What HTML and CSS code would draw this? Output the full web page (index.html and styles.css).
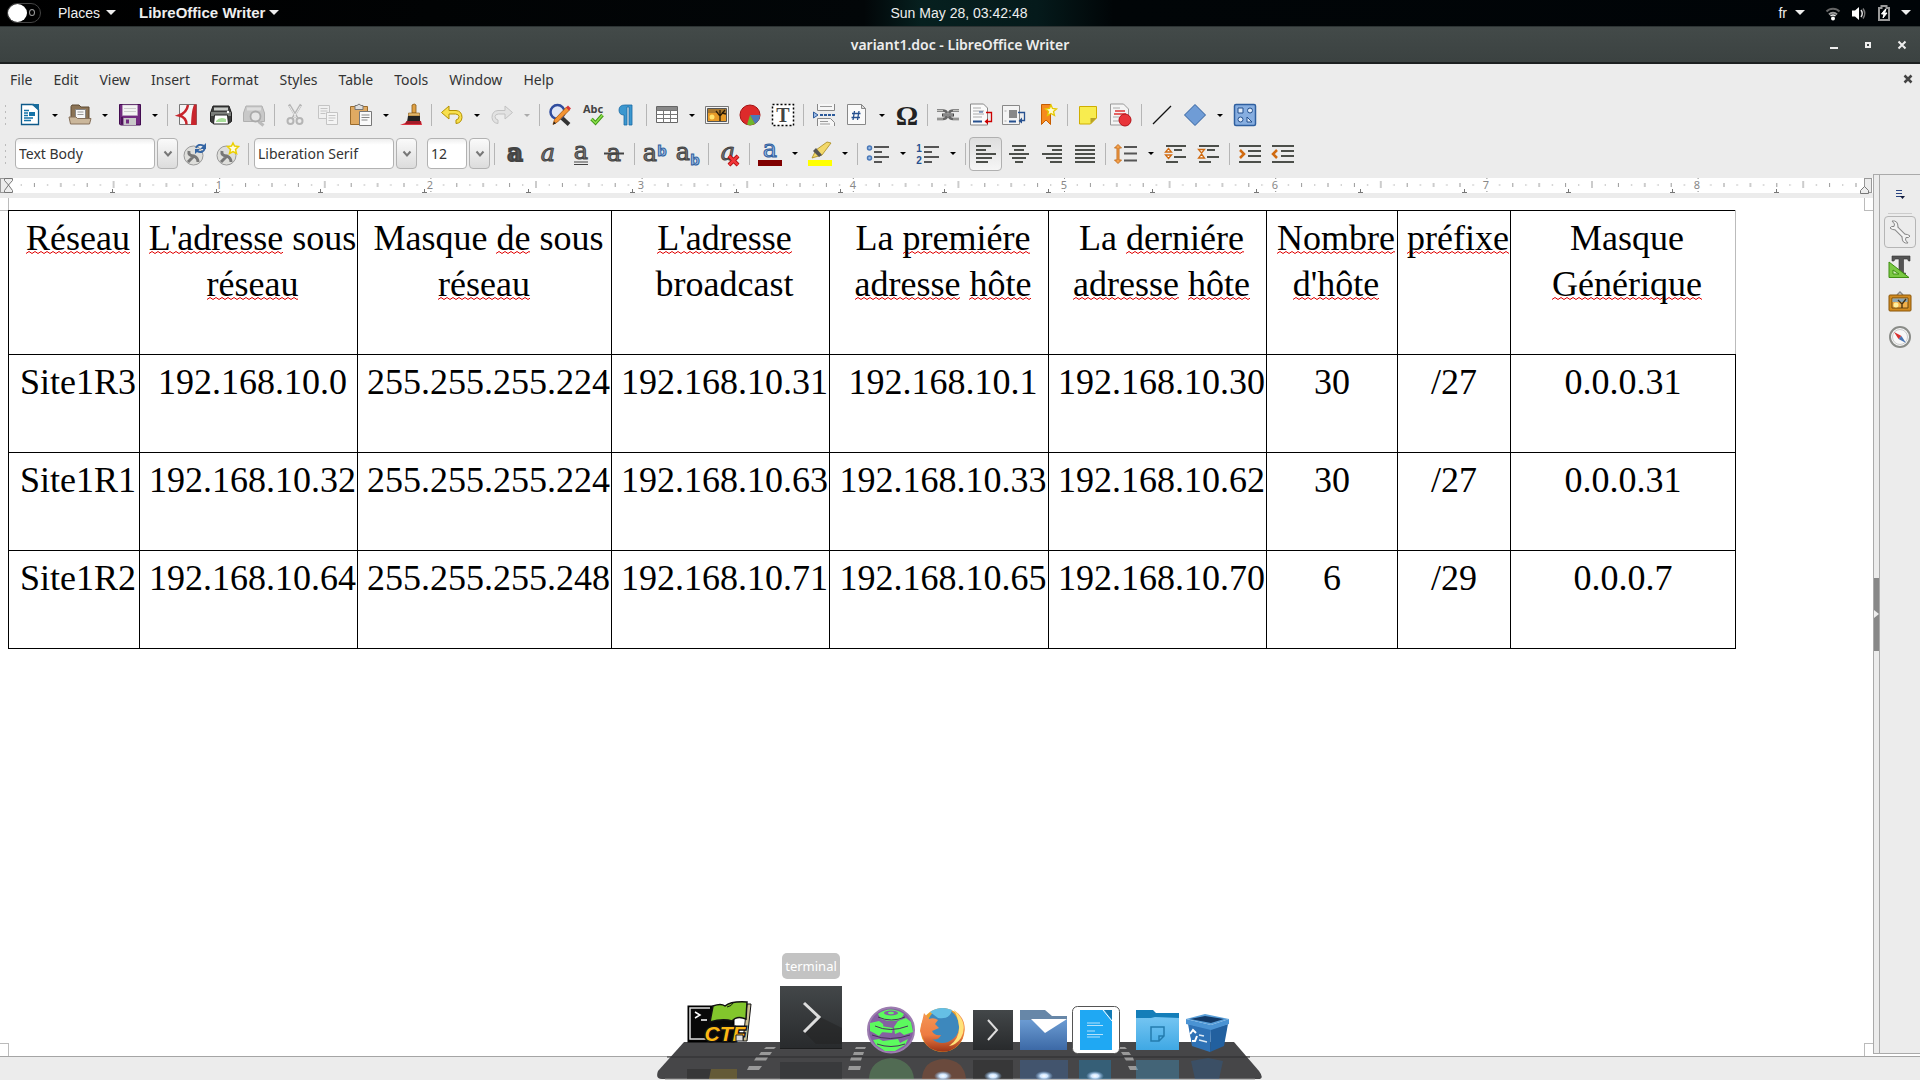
FILE: index.html
```html
<!DOCTYPE html>
<html lang="en">
<head>
<meta charset="utf-8">
<title>variant1.doc - LibreOffice Writer</title>
<link rel="stylesheet" href="styles.css">
</head>
<body>
<header class="topbar">
  <div class="topbar-side">
    <button class="activities" aria-label="Activities"><span class="knob"></span><span class="ring"></span></button>
    <button class="top-item">Places<span class="tri"></span></button>
    <button class="top-item top-app">LibreOffice Writer<span class="tri"></span></button>
  </div>
  <time class="clock">Sun May 28, 03:42:48</time>
  <div class="topbar-side topbar-right">
    <button class="top-item lang">fr<span class="tri"></span></button>
    <button class="top-item tray" aria-label="System">
      <svg width="16" height="16" viewBox="0 0 16 16" fill="none"><path d="M1.5 6.5a9 9 0 0 1 13 0" stroke="#666" stroke-width="2"/><path d="M4 9.5a5.500 5.500 0 0 1 8 0" stroke="#999" stroke-width="2"/><path d="M5.500 11a4 4 0 0 1 5 0" stroke="#eee" stroke-width="1.500"/><circle cx="8" cy="13.500" r="2" fill="#fff"/></svg>
      <svg width="16" height="16" viewBox="0 0 16 16" fill="none"><path d="M1 5.500h3L8 2v13L4 11.500H1z" fill="#fff"/><path d="M10 5q2.500 3.500 0 7" stroke="#ddd" stroke-width="1.500"/><path d="M12 3.500q3.500 5 0 10" stroke="#777" stroke-width="1.500"/></svg>
      <svg width="14" height="18" viewBox="0 0 14 18" fill="none"><path d="M2 4h2.500V2h5v2H12v12H2z" stroke="#999" stroke-width="2"/><path d="M8 5.500L4.500 10H7l-1 4 4-5H7.500l1.500-3.500z" fill="#fff" stroke="#fff"/></svg>
      <span class="tri"></span>
    </button>
  </div>
</header>

<div class="titlebar">
  <h1 class="title">variant1.doc - LibreOffice Writer</h1>
  <div class="win-buttons">
    <button aria-label="Minimize"><svg width="10" height="10"><path d="M1 7h8v2H1z" fill="#eee"/></svg></button>
    <button aria-label="Maximize"><svg width="10" height="10"><path d="M3 3h4v4H3z" fill="none" stroke="#eee" stroke-width="2"/></svg></button>
    <button aria-label="Close"><svg width="10" height="10"><path d="M1.500 1.500l7 7m0-7l-7 7" stroke="#eee" stroke-width="2"/></svg></button>
  </div>
</div>

<nav class="menubar">
  <button>File</button><button>Edit</button><button>View</button><button>Insert</button><button>Format</button><button>Styles</button><button>Table</button><button>Tools</button><button>Window</button><button>Help</button>
  <button class="doc-close" aria-label="Close document"><svg width="10" height="10"><path d="M1.500 1.500l7 7m0-7l-7 7" stroke="#444" stroke-width="2.500"/></svg></button>
</nav>

<div class="toolbar" role="toolbar" aria-label="Standard">
  <span class="grip"></span>
  <button class="tb" aria-label="New"><svg viewBox="0 0 24 24"><path d="M3.500 1.500h12l5 5v15h-17z" fill="#fff" stroke="#0e5a8a" stroke-width="1.300"/><path d="M13 1h8v7z" fill="#1a6c9c"/><path d="M6 7.500h5M6 10h4M6 12.500h4M6 15h9M6 17.500h7" stroke="#1573a8" stroke-width="1.500"/><path d="M11 9h6v4h-6z" fill="#1573a8"/></svg></button>
  <button class="dd" aria-label="New options"></button>
  <button class="tb" aria-label="Open"><svg viewBox="0 0 24 24"><path d="M3 18V3.500l1-1.500h7l2 2h8v14z" fill="#8b7355" stroke="#5f4b33"/><path d="M7.500 6.500h10V16h-10z" fill="#f8f8f8" stroke="#888"/><path d="M9.500 9h6M9.500 11.500h6" stroke="#999"/><path d="M1 14h7l1.500 1.500H23l-1.500 5.500h-19z" fill="#cbb79b" stroke="#86705a"/></svg></button>
  <button class="dd" aria-label="Open options"></button>
  <button class="tb" aria-label="Save"><svg viewBox="0 0 24 24"><path d="M1.500 1.500h21v20.500h-20l-1-1z" fill="#722a80" stroke="#430c50"/><path d="M4.500 2h15v10.500h-15z" fill="#f3f3f3" stroke="#bda7c2" stroke-width=".6"/><path d="M6 5.500h12M6 8.500h12" stroke="#ccc"/><path d="M5.500 15H18v7H5.500z" fill="#c9c9c9"/><path d="M8 16.500h3v4H8z" fill="#722a80"/><path d="M3 14h2v7H3z" fill="#4b1458"/></svg></button>
  <button class="dd" aria-label="Save options"></button>
  <span class="sep"></span>
  <button class="tb" aria-label="Export as PDF"><svg viewBox="0 0 24 24"><path d="M3.500 1.500h17v20h-17z" fill="#f5f5f5" stroke="#777"/><path d="M12 2C11 8 7 11 3 12.500c4 1 7.500 4 7.500 9" fill="none" stroke="#c8252c" stroke-width="2.500"/><path d="M15 22c.5-8 .5-14 3-20.500h2.500V22z" fill="#c8252c"/></svg></button>
  <button class="tb" aria-label="Print"><svg viewBox="0 0 24 24"><path d="M4 3h16l2.500 7v8.500l-2 1.500h-17l-2-1.500V10z" fill="#3c3c3c" stroke="#222"/><path d="M5 4.500h14v3H5z" fill="#c9ccc9"/><path d="M2 9h20v4H2z" fill="#7a7d7a"/><circle cx="19" cy="9" r="1.200" fill="#fff"/><path d="M5.500 12h13l1 9h-15z" fill="#fff" stroke="#222"/><path d="M7 18q4-5 10-2v3H7z" fill="#a8dd9a"/></svg></button>
  <button class="tb" aria-label="Print preview"><svg viewBox="0 0 24 24"><path d="M4 3h16l2.500 7v8.500H1.500V10z" fill="#c8c8c8" stroke="#b0b0b0"/><path d="M5 4.500h14v3H5z" fill="#dedede"/><path d="M16.500 18.500l5 4" stroke="#bbb" stroke-width="3"/><circle cx="13.500" cy="13.500" r="5" fill="#e6e6e6" stroke="#aaa" stroke-width="1.800"/></svg></button>
  <span class="sep"></span>
  <button class="tb" aria-label="Cut"><svg viewBox="0 0 24 24" fill="none" stroke="#b5b5b5"><path d="M6 1.500l8.500 14M18 1.500l-8.500 14" stroke-width="2.500"/><path d="M6.500 3l7 12M17.500 3l-7 12" stroke="#ececec"/><circle cx="7.500" cy="18" r="3" stroke-width="2"/><circle cx="16.500" cy="18" r="3" stroke-width="2"/></svg></button>
  <button class="tb" aria-label="Copy"><svg viewBox="0 0 24 24" stroke="#c4c4c4"><path d="M2.500 2.500h11v13h-11z" fill="#f0f0f0"/><path d="M4.500 5.500h7M4.500 8h7M4.500 10.500h5"/><path d="M10.500 9.500h11v12h-11z" fill="#f4f4f4"/><path d="M12.500 12.500h7M12.500 15h7M12.500 17.500h5"/></svg></button>
  <button class="tb" aria-label="Paste"><svg viewBox="0 0 24 24"><path d="M1.500 3.500h17v18h-17z" fill="#e0aa62" stroke="#9a6b2c"/><path d="M6 2.500h2q2-3 4 0h2v4H6z" fill="#ddd" stroke="#777"/><path d="M10.500 8.500h12v14h-12z" fill="#fafafa" stroke="#777"/><path d="M12.500 12h8M12.500 14.500h8M12.500 17h6" stroke="#888"/></svg></button>
  <button class="dd" aria-label="Paste options"></button>
  <button class="tb" aria-label="Clone formatting"><svg viewBox="0 0 24 24"><path d="M1 22q5-1 9-5l12 1 1 4z" fill="#dd3340"/><path d="M13 2q2.500-2 4 0v8h-4z" fill="#dfa044" stroke="#875a18" stroke-width=".8"/><path d="M9.500 10h11v3h-11z" fill="#e2b66a" stroke="#875a18" stroke-width=".6"/><path d="M9 13h12v6H8z" fill="#222"/><path d="M7.500 18h14l.5 3H6z" fill="#a31b28"/></svg></button>
  <span class="sep"></span>
  <button class="tb" aria-label="Undo"><svg viewBox="0 0 24 24"><path d="M9 3v4.500h7q6 .5 6 7-.5 5.500-6 6v-3.500q3-.5 3-3.500-.5-2.500-3.500-2.500H9V16L1.500 9.500z" fill="#f8e04e" stroke="#b49100" stroke-linejoin="round"/></svg></button>
  <button class="dd" aria-label="Undo options"></button>
  <button class="tb" aria-label="Redo"><svg viewBox="0 0 24 24"><path d="M15 3v4.500H8q-6 .5-6 7 .5 5.500 6 6v-3.500q-3-.5-3-3.500.5-2.500 3.500-2.500H15V16l7.500-6.500z" fill="#e2e2e2" stroke="#c2c2c2" stroke-linejoin="round"/></svg></button>
  <button class="dd dd-off" aria-label="Redo options"></button>
  <span class="sep"></span>
  <button class="tb" aria-label="Find and replace"><svg viewBox="0 0 24 24"><path d="M14 15l7 6.500" stroke="#333" stroke-width="4"/><circle cx="9.500" cy="9" r="7" fill="#dfe6f5" stroke="#2f4c9e" stroke-width="2.500"/><path d="M5 21.500l1.500-5L18.500 4l3 3-12 12z" fill="#f39434" stroke="#a85508" stroke-width=".8"/><path d="M18 4.500l2-2 3 3-2 2z" fill="#d7383c"/><path d="M5 21.500l1-3 2 2z" fill="#222"/></svg></button>
  <button class="tb" aria-label="Spelling"><svg viewBox="0 0 24 24"><text x="12" y="10" class="ico-abc">Abc</text><path d="M10.500 16l4 4 7-8" fill="none" stroke="#3f9a14" stroke-width="3.500"/><path d="M10.500 16l4 4 7-8" fill="none" stroke="#8fe04e" stroke-width="1.500"/></svg></button>
  <button class="tb" aria-label="Formatting marks"><svg viewBox="0 0 24 24"><path d="M5 7q0-5 6-5h7v20h-3V4h-2v18h-3V12Q5 12 5 7z" fill="#3b97cf" stroke="#1b6ba4" stroke-width=".8"/></svg></button>
  <span class="sep"></span>
  <button class="tb" aria-label="Insert table"><svg viewBox="0 0 24 24"><path d="M1.500 3.500h21v16h-21z" fill="#fff" stroke="#666"/><path d="M2 4h20v3.500H2z" fill="#888"/><path d="M1.500 7.500h21M1.500 11.500h21M1.500 15.500h21M8.500 7v12.500M15.500 7v12.500" stroke="#777"/></svg></button>
  <button class="dd" aria-label="Table options"></button>
  <button class="tb" aria-label="Insert image"><svg viewBox="0 0 24 24"><path d="M.5 3.500h23v17H.5z" fill="#f3f3f3" stroke="#777"/><path d="M2.500 5.500h19v13h-19z" fill="#e79b28" stroke="#555"/><path d="M3 6h18v4H3z" fill="#a9782e"/><circle cx="7" cy="14" r="2.500" fill="#ffe26e"/><path d="M15 18v-5l-4-5m4 5l5-6m-5 5V7m2 3l4 1" fill="none" stroke="#2a1c08" stroke-width="1.300"/></svg></button>
  <button class="tb" aria-label="Insert chart"><svg viewBox="0 0 24 24"><circle cx="12" cy="12" r="10" fill="#dd2b2b" stroke="#a51212"/><path d="M12 12h10q0 6-5 9z" fill="#4d79b8"/><path d="M12 12l5 9q-4 2-8 .5z" fill="#6fb62c"/></svg></button>
  <button class="tb" aria-label="Insert text box"><svg viewBox="0 0 24 24"><path d="M1.500 1.500h21v21h-21z" fill="#fff" stroke="#000" stroke-width="1.500" stroke-dasharray="2 2"/><text x="12" y="19" class="ico-t">T</text></svg></button>
  <span class="sep"></span>
  <button class="tb" aria-label="Insert page break"><svg viewBox="0 0 24 24"><path d="M5.500 1v6.500h17V1M5.500 23v-7.500h13l4 4V23" fill="#f6f6f6" stroke="#888"/><path d="M8 3.500h12M8 18.500h8M8 21h10" stroke="#999"/><path d="M1.500 9l4.500 3-4.500 3z" fill="#9dbbe6" stroke="#2c5a9a"/><path d="M8 12h15" stroke="#2c5a9a" stroke-width="2" stroke-dasharray="3 1"/></svg></button>
  <button class="tb" aria-label="Insert field"><svg viewBox="0 0 24 24"><path d="M2.500 1.500h14l4 4v16h-18z" fill="#fafafa" stroke="#888"/><path d="M16.500 1.500v4h4z" fill="#ddd" stroke="#888"/><path d="M9.500 8l-1.500 9M14 8l-1.500 9M7 10.500h8.500M6.500 14.500H15" stroke="#26508f" stroke-width="1.300"/></svg></button>
  <button class="dd" aria-label="Field options"></button>
  <button class="tb" aria-label="Special character"><svg viewBox="0 0 24 24"><text x="12" y="22" class="ico-omega">Ω</text></svg></button>
  <span class="sep"></span>
  <button class="tb" aria-label="Insert hyperlink"><svg viewBox="0 0 24 24" fill="none"><path d="M1 7.500h6q3 0 4 2.500M1 16h6q3 0 4-2.500M23 7.500h-6q-3 0-4 2.500M23 16h-6q-3 0-4-2.500" stroke="#666" stroke-width="2.500"/><path d="M1 7.500h6M1 16h6M23 7.500h-6M23 16h-6" stroke="#c4c4c0"/><path d="M6 12h12" stroke="#444" stroke-width="3"/><path d="M7 12h10" stroke="#ccc"/></svg></button>
  <button class="tb" aria-label="Insert footnote"><svg viewBox="0 0 24 24"><path d="M1.500 1h13l4 4v17h-17z" fill="#fafafa" stroke="#888"/><path d="M4 5h8M4 8h11M4 11h11M4 14h9" stroke="#aaa"/><path d="M10 9h4" stroke="#26508f"/><path d="M4 18.500h9" stroke="#26508f" stroke-width="2"/><path d="M17 9.500h5.500v9H18" fill="none" stroke="#c00" stroke-width="1.300"/><path d="M19 15.500v6l-3.500-3z" fill="#c00"/></svg></button>
  <button class="tb" aria-label="Insert endnote"><svg viewBox="0 0 24 24"><path d="M.5 2.500h17v19H.5z" fill="#f4f4f4" stroke="#888"/><path d="M7 7h8v8H7z" fill="#888"/><path d="M7 18.500h7" stroke="#26508f" stroke-width="2"/><path d="M2.500 8h2M2.500 18h2" stroke="#aaa"/><path d="M16 9.500h6.500v8H19" fill="none" stroke="#26508f" stroke-width="1.300"/><path d="M20 14.500v6L16.500 18z" fill="#26508f"/></svg></button>
  <button class="tb" aria-label="Insert bookmark"><svg viewBox="0 0 24 24"><path d="M6.500 1.500h9v20L11 17l-4.500 4.500z" fill="#f58a1f" stroke="#c65c00"/><path d="M16 2l1.500 3.500 4 .5-3 2.500 1 4-3.500-2-3.500 2 1-4-3-2.500 4-.5z" fill="#fffbd0" stroke="#e6c800" stroke-width="1.300"/></svg></button>
  <span class="sep"></span>
  <button class="tb" aria-label="Insert comment"><svg viewBox="0 0 24 24"><path d="M3.500 3.500h17V15l-6 6h-11z" fill="#f8ec4f" stroke="#cfae00"/><path d="M20.500 15h-6v6z" fill="#b9a326"/></svg></button>
  <button class="tb" aria-label="Track changes"><svg viewBox="0 0 24 24"><path d="M1.500 1h13l5 5v16h-18z" fill="#f4f4f4" stroke="#999"/><path d="M4 5h7M4 14h6M4 18h6" stroke="#aaa"/><path d="M6 8h10M5 11h12" stroke="#d33" stroke-width="1.500"/><circle cx="16" cy="17" r="6" fill="#e8353a" stroke="#b51218"/></svg></button>
  <span class="sep"></span>
  <button class="tb" aria-label="Line"><svg viewBox="0 0 24 24"><path d="M3 21L21 3" stroke="#111" stroke-width="1.200"/></svg></button>
  <button class="tb" aria-label="Basic shapes"><svg viewBox="0 0 24 24"><path d="M12 1.500L22.500 12 12 22.500 1.500 12z" fill="#6f9cd6" stroke="#2f5f9f"/></svg></button>
  <button class="dd" aria-label="Shape options"></button>
  <button class="tb" aria-label="Show draw functions"><svg viewBox="0 0 24 24"><rect x="1.500" y="1.500" width="21" height="21" rx="1.500" fill="#87aee0" stroke="#2f5f9f" stroke-width="1.500"/><g fill="#dfeaf8" stroke="#234f8c"><path d="M5 5h5v5H5z"/><circle cx="17" cy="7.500" r="2.500"/><circle cx="7.500" cy="16.500" r="2.500"/><path d="M14 14v5h5z"/></g></svg></button>
</div>

<div class="toolbar" role="toolbar" aria-label="Formatting">
  <span class="grip"></span>
  <span class="combo combo-wide"><input type="text" value="Text Body" aria-label="Paragraph style"><button aria-label="Show styles"><svg width="10" height="8"><path d="M1.500 1.500L5 5.500l3.500-4" fill="none" stroke="#777" stroke-width="2"/></svg></button></span>
  <button class="tb" aria-label="Update style"><svg viewBox="0 0 24 24"><circle cx="10.500" cy="13.500" r="9.500" fill="#dededb" stroke="#999"/><path d="M5 20l6-6m-5-5q-1 5 5 5 4 2 4 6" fill="none" stroke="#777" stroke-width="3"/><path d="M13 6q2-5 8-2m1 2q-2 6-8 3" fill="none" stroke="#3465a4" stroke-width="2"/><path d="M23 1v6h-6zM12 12V7h5z" fill="#3465a4"/></svg></button>
  <button class="tb" aria-label="New style"><svg viewBox="0 0 24 24"><circle cx="10.500" cy="13.500" r="9.500" fill="#dededb" stroke="#999"/><path d="M5 20l6-6m-5-5q-1 5 5 5 4 2 4 6" fill="none" stroke="#777" stroke-width="3"/><path d="M17 1l1.500 3 4 .5-3 3 1 4-3.500-2-3.500 2 1-4-3-3 4-.5z" fill="#fffde0" stroke="#ecd000" stroke-width="1.500"/></svg></button>
  <span class="sep"></span>
  <span class="combo combo-wide"><input type="text" value="Liberation Serif" aria-label="Font name"><button aria-label="Show fonts"><svg width="10" height="8"><path d="M1.500 1.500L5 5.500l3.500-4" fill="none" stroke="#777" stroke-width="2"/></svg></button></span>
  <span class="combo combo-size"><input type="text" value="12" aria-label="Font size"><button aria-label="Show sizes"><svg width="10" height="8"><path d="M1.500 1.500L5 5.500l3.500-4" fill="none" stroke="#777" stroke-width="2"/></svg></button></span>
  <span class="sep"></span>
  <button class="tb" aria-label="Bold"><svg viewBox="0 0 24 24"><text x="12" y="19" class="ico-a ico-bold">a</text></svg></button>
  <button class="tb" aria-label="Italic"><svg viewBox="0 0 24 24"><text x="12" y="19" class="ico-a ico-italic">a</text></svg></button>
  <button class="tb" aria-label="Underline"><svg viewBox="0 0 24 24"><text x="12" y="17" class="ico-a">a</text><path d="M5 20h14M5 22.500h14" stroke="#444" stroke-width="1.200"/></svg></button>
  <button class="tb" aria-label="Strikethrough"><svg viewBox="0 0 24 24"><text x="12" y="19" class="ico-a">a</text><path d="M2 11.500h20" stroke="#444" stroke-width="2"/></svg></button>
  <span class="sep"></span>
  <button class="tb" aria-label="Superscript"><svg viewBox="0 0 24 24"><text x="7" y="19" class="ico-a">a</text><text x="19" y="14" class="ico-b">b</text></svg></button>
  <button class="tb" aria-label="Subscript"><svg viewBox="0 0 24 24"><text x="7" y="18" class="ico-a">a</text><text x="19" y="23" class="ico-b">b</text></svg></button>
  <span class="sep"></span>
  <button class="tb" aria-label="Clear formatting"><svg viewBox="0 0 24 24"><text x="11" y="18" class="ico-a ico-italic">a</text><path d="M12 14l9 9m0-9l-9 9" stroke="#a40000" stroke-width="4"/><path d="M12 14l9 9m0-9l-9 9" stroke="#f0363a" stroke-width="2.500"/></svg></button>
  <span class="sep"></span>
  <button class="tb" aria-label="Font color"><svg viewBox="0 0 24 24"><text x="12" y="15" class="ico-a ico-blue">a</text><path d="M0 18h24v6H0z" fill="#800000"/></svg></button>
  <button class="dd" aria-label="Font color options"></button>
  <button class="tb" aria-label="Highlighting"><svg viewBox="0 0 24 24"><path d="M4 16l4-8L19 0l4 1-9 12z" fill="#f2d86a" stroke="#a88a1c" stroke-width=".8"/><path d="M8 6l6 7-3 2-6-6z" fill="#555"/><path d="M0 18h24v6H0z" fill="#ffff00"/></svg></button>
  <button class="dd" aria-label="Highlight options"></button>
  <span class="sep"></span>
  <button class="tb" aria-label="Bullets"><svg viewBox="0 0 24 24"><g fill="#9dbce4" stroke="#4a79b8" stroke-width="1.500"><circle cx="3.500" cy="6" r="2"/><circle cx="3.500" cy="16" r="2"/></g><path d="M8 5h15M8 10h8M8 15h15M8 20h8" stroke="#555" stroke-width="2"/></svg></button>
  <button class="dd" aria-label="Bullet options"></button>
  <button class="tb" aria-label="Numbering"><svg viewBox="0 0 24 24"><text x="3" y="10" class="ico-n">1</text><text x="3" y="22" class="ico-n">2</text><path d="M8 5h15M8 10h8M8 15h15M8 20h8" stroke="#555" stroke-width="2"/></svg></button>
  <button class="dd" aria-label="Numbering options"></button>
  <span class="sep"></span>
  <button class="tb tb-on" aria-label="Align left"><svg viewBox="0 0 24 24"><path d="M2 4h15M2 8h10M2 12h20M2 16h16M2 20h12" stroke="#4c4f4a" stroke-width="2"/></svg></button>
  <button class="tb" aria-label="Center"><svg viewBox="0 0 24 24"><path d="M5 4h14M7 8h10M2 12h20M5 16h14M8 20h8" stroke="#4c4f4a" stroke-width="2"/></svg></button>
  <button class="tb" aria-label="Align right"><svg viewBox="0 0 24 24"><path d="M7 4h15M12 8h10M2 12h20M6 16h16M10 20h12" stroke="#4c4f4a" stroke-width="2"/></svg></button>
  <button class="tb" aria-label="Justify"><svg viewBox="0 0 24 24"><path d="M2 4h20M2 8h20M2 12h20M2 16h20M2 20h20" stroke="#4c4f4a" stroke-width="2"/></svg></button>
  <span class="sep"></span>
  <button class="tb" aria-label="Line spacing"><svg viewBox="0 0 24 24"><path d="M4 2.500L.5 6H3v12H.5L4 21.500 7.500 18H5V6h2.500z" fill="#f3a04a" stroke="#c87020"/><path d="M10 5h13M10 11.500h13M10 18.500h13" stroke="#555" stroke-width="2"/></svg></button>
  <button class="dd" aria-label="Line spacing options"></button>
  <button class="tb" aria-label="Increase paragraph spacing"><svg viewBox="0 0 24 24"><path d="M2 4h20M10 8h8M10 15h12M2 20h12" stroke="#4c4f4a" stroke-width="2"/><path d="M4.500 6.500L7.500 10h-6zM4.500 16.500L7.500 13h-6z" fill="#fff" stroke="#d06a10" stroke-width="1.300"/></svg></button>
  <button class="tb" aria-label="Decrease paragraph spacing"><svg viewBox="0 0 24 24"><path d="M2 4h20M10 8h8M10 15h12M2 20h12" stroke="#4c4f4a" stroke-width="2"/><path d="M4.500 11L7.500 7.500h-6zM4.500 12L7.500 16h-6z" fill="#fff" stroke="#d06a10" stroke-width="1.300"/></svg></button>
  <span class="sep"></span>
  <button class="tb" aria-label="Increase indent"><svg viewBox="0 0 24 24"><path d="M1 4h22M10 9h13M10 14h13M1 20h22" stroke="#4c4f4a" stroke-width="2"/><path d="M2 8l4 4-4 4" fill="none" stroke="#d06a10" stroke-width="2.500"/></svg></button>
  <button class="tb" aria-label="Decrease indent"><svg viewBox="0 0 24 24"><path d="M1 4h22M10 9h13M10 14h13M1 20h22" stroke="#4c4f4a" stroke-width="2"/><path d="M6 8l-4 4 4 4" fill="none" stroke="#d06a10" stroke-width="2.500"/></svg></button>
</div>

<div class="workspace">
  <div class="editor">
    <svg class="ruler" height="24" aria-label="Ruler">
      <defs>
        <pattern id="inch" x="8" y="0" width="211.200" height="24" patternUnits="userSpaceOnUse">
          <path d="M26.400 9v4M52.800 9v4M79.200 9v4M132 9v4M158.400 9v4M184.800 9v4M105.600 7v7" stroke="#999"/>
          <path d="M13.200 10.500v1M39.600 10.500v1M66 10.500v1M92.400 10.500v1M118.800 10.500v1M145.200 10.500v1M171.600 10.500v1M198 10.500v1" stroke="#888"/>
          <path d="M.5 4v1M.5 17v1" stroke="#888"/>
        </pattern>
        <pattern id="tab" x="60" y="0" width="104" height="24" patternUnits="userSpaceOnUse">
          <path d="M50 18.500h5M52.500 15v4" stroke="#777"/>
        </pattern>
      </defs>
      <rect y="4" width="100%" height="15" fill="#fff"/>
      <rect width="100%" height="24" fill="url(#inch)"/>
      <rect x="60" width="100%" height="24" fill="url(#tab)"/>
      <g class="ruler-num"><text x="219" y="15">1</text><text x="430" y="15">2</text><text x="641" y="15">3</text><text x="853" y="15">4</text><text x="1064" y="15">5</text><text x="1275" y="15">6</text><text x="1486" y="15">7</text><text x="1697" y="15">8</text></g>
      <rect x=".5" y="4.500" width="8" height="14" fill="#ececec" stroke="#999"/>
      <path d="M4.500 4.500h8v2l-4 4.500-4-4.500zM4.500 18.500h8v-2L8.500 11l-4 5.500z" fill="#eee" stroke="#777"/>
      <svg x="100%" width="1" height="24" overflow="visible">
        <rect x="-8.500" y="4.500" width="7" height="14" fill="#ececec" stroke="#999"/>
        <path d="M-12.500 19.500h8v-3l-4-4-4 4z" fill="#eee" stroke="#777"/>
      </svg>
    </svg>
    <main class="page">
      <span class="crop crop-tl"></span><span class="crop crop-tr"></span><span class="crop crop-bl"></span><span class="crop crop-br"></span>
      <table class="subnets">
        <colgroup><col class="c-name"><col class="c-ip"><col class="c-mask"><col class="c-ip"><col class="c-first"><col class="c-ip"><col class="c-name"><col class="c-prefix"><col></colgroup>
        <thead>
          <tr>
            <th><u>Réseau</u></th>
            <th><u>L'adresse</u> sous <u>réseau</u></th>
            <th>Masque <u>de</u> sous <u>réseau</u>&nbsp;</th>
            <th><u>L'adresse</u> broadcast</th>
            <th>La <u>premiére</u> <u>adresse</u> <u>hôte</u></th>
            <th>La <u>derniére</u> <u>adresse</u> <u>hôte</u></th>
            <th><u>Nombre</u> <u>d'hôte</u></th>
            <th><u>préfixe</u></th>
            <th>Masque <br><u>Générique</u></th>
          </tr>
        </thead>
        <tbody>
          <tr><td>Site1R3</td><td>192.168.10.0</td><td>255.255.255.224</td><td>192.168.10.31</td><td>192.168.10.1</td><td>192.168.10.30</td><td class="pad">30</td><td class="pad">/27</td><td class="pad">0.0.0.31</td></tr>
          <tr><td>Site1R1</td><td>192.168.10.32</td><td>255.255.255.224</td><td>192.168.10.63</td><td>192.168.10.33</td><td>192.168.10.62</td><td class="pad">30</td><td class="pad">/27</td><td class="pad">0.0.0.31</td></tr>
          <tr><td>Site1R2</td><td>192.168.10.64</td><td>255.255.255.248</td><td>192.168.10.71</td><td>192.168.10.65</td><td>192.168.10.70</td><td class="pad">6</td><td class="pad">/29</td><td class="pad">0.0.0.7</td></tr>
        </tbody>
      </table>
    </main>
  </div>
  <div class="splitter"><button aria-label="Hide sidebar"><svg width="5" height="8"><path d="M0 0l5 4-5 4z" fill="#eee"/></svg></button></div>
  <aside class="sidebar">
    <button class="side" aria-label="Sidebar settings"><svg viewBox="0 0 24 24"><path d="M8 8.500h6M8 11.500h6M8 14.500h6" stroke="#2a4480" stroke-width="1.200"/><path d="M12 14h5l-2.500 3z" fill="#111a3c"/></svg></button>
    <hr>
    <button class="side side-on" aria-label="Properties"><svg viewBox="0 0 24 24"><path d="M6 6l12 12" stroke="#888" stroke-width="5"/><path d="M4 1q6-1 6 6-3 5-8 1l1.500-1.500 2.500 0 .5-2.500zM20 23q-6 1-6-6 3-5 8-1l-1.500 1.500h-2.500l-.5 2.500z" fill="#f2f2f2" stroke="#888"/><path d="M7 7l10 10" stroke="#f2f2f2" stroke-width="3"/></svg></button>
    <button class="side" aria-label="Styles and formatting"><svg viewBox="0 0 24 24"><path d="M4 1h18v5h-1.500l-1-2h-4v14h2v1.500H9V18h2V4H7L6 6H4z" fill="#555" stroke="#333" stroke-width=".6"/><path d="M1 7v15.500h20z" fill="#7ac943" stroke="#3f8f12"/><path d="M5 15v4h6z" fill="#d4efbf" stroke="#3f8f12"/></svg></button>
    <button class="side" aria-label="Gallery"><svg viewBox="0 0 24 24"><path d="M9 5l3-3 3 3" fill="none" stroke="#888" stroke-width="1.500"/><rect x="1" y="5" width="22" height="16" rx="1" fill="#d18a1f" stroke="#8a560b"/><path d="M4 8h16v10H4z" fill="#f2b04a" stroke="#6f4a10"/><path d="M4.500 8.500h15V12h-15z" fill="#8ca6b4"/><circle cx="8" cy="15" r="2.500" fill="#fff0a0"/><path d="M14 18v-4l-4-4m4 4l4-5" fill="none" stroke="#443010" stroke-width="1.300"/></svg></button>
    <button class="side" aria-label="Navigator"><svg viewBox="0 0 24 24"><circle cx="12" cy="12" r="10" fill="#f8f8f8" stroke="#8a8c88" stroke-width="2"/><circle cx="12" cy="12" r="7.500" fill="none" stroke="#ccc"/><path d="M6 7l7.500 4-3 3z" fill="#d92f2f"/><path d="M18 18l-7.500-4 3-3z" fill="#4a76b4"/></svg></button>
  </aside>
</div>
<footer class="statusbar"></footer>

<div class="dock">
  <svg class="dock-plate" viewBox="0 0 606 38" aria-hidden="true">
    <defs>
      <linearGradient id="dark" x2="0" y2="1"><stop stop-color="#434749"/><stop offset="1" stop-color="#282a2c"/></linearGradient>
      <linearGradient id="blue" x2="0" y2="1"><stop stop-color="#74c5f2"/><stop offset="1" stop-color="#3fa8e4"/></linearGradient>
      <linearGradient id="mail" x2="0" y2="1"><stop stop-color="#6b9bd2"/><stop offset="1" stop-color="#3c69a6"/></linearGradient>
      <linearGradient id="fox" x2="0" y2="1"><stop stop-color="#f59a58"/><stop offset=".6" stop-color="#ee7c42"/><stop offset="1" stop-color="#9c3418"/></linearGradient>
      <radialGradient id="glow"><stop stop-color="#fff"/><stop offset=".4" stop-color="#cfe6ff"/><stop offset="1" stop-color="#7fb2e6" stop-opacity="0"/></radialGradient>
    </defs>
    <path d="M27 0h550l25 29q6 8-1 8H5q-7 0-4-8z" fill="#464648"/>
    <path d="M10 15h583" stroke="#2c2c2e"/>
    <path d="M8 37h590" stroke="#888"/>
    <g fill="#999"><path d="M109 5h10l-2 2h-10zM104 10h11l-2 3h-11zM99 15.500h12l-2 3H97zM92 24h13l-3 4H90zM199 5h10l-1 2h-10zM197 10h10l-1 3h-10zM194 15.500h11l-1 3h-11zM192 24h12l-1 4h-12zM461 5h7l2 2h-7zM464 10h8l2 3h-8zM467 15.500h9l1 3h-8zM471 24h8l2 4h-8z"/></g>
    <g opacity=".4"><path d="M30 27h46v10H30z" fill="#222"/><path d="M54 27h26v10H52z" fill="#937a20"/><path d="M123 20h62v17h-62z" fill="#27292b"/><path d="M212 37q1-19 22-21 21 2 23 21z" fill="#63a364"/><path d="M265 37q1-19 22-20 20 1 22 20z" fill="#a0522d"/><path d="M316 18h40v19h-40z" fill="#222"/><path d="M363 18h48v19h-48z" fill="#3d6ba5"/><path d="M422 18h32v19h-32z" fill="#1f86bf"/><path d="M479 18h43v19h-43z" fill="#3f91be"/><path d="M534 19l17-3 15 3-4 18h-24z" fill="#2c5d91"/></g>
    <g fill="url(#glow)"><ellipse cx="286" cy="34" rx="9" ry="5"/><ellipse cx="336" cy="34" rx="9" ry="5"/><ellipse cx="387" cy="34" rx="9" ry="5"/><ellipse cx="438" cy="34" rx="9" ry="5"/></g>
  </svg>
  <div class="dock-items">
    <button aria-label="CTF"><svg width="65" height="54" viewBox="0 0 65 54"><path d="M1.500 6.500h45v35h-45z" fill="#080808" stroke="#000" stroke-width="2"/><path d="M20 39H3V8h20" fill="none" stroke="#ddd" stroke-width="1.500"/><path d="M8 12l5 3-5 3M14 20h6" fill="none" stroke="#fff" stroke-width="1.500"/><path d="M60 4h4l-4 37h-4z" fill="#cbbf95" stroke="#111"/><path d="M26 6q8-3 12 0 6-5 22-4l-1 17q-9-4-14 2-9-3-22 1z" fill="#82c62c" stroke="#111" stroke-width="1.500"/><path d="M40 7q5-1 6-4" fill="none" stroke="#111"/><text x="38" y="41" class="ctf">CTF</text><path d="M49 35h7v6h-7z" fill="#ddd" stroke="#222"/></svg></button>
    <span class="gap gap-a"></span>
    <div class="dock-hover"><span class="tip" role="tooltip">terminal</span><button aria-label="terminal"><svg width="62" height="68" viewBox="0 0 62 68"><path d="M0 0h62v63H0z" fill="url(#dark)"/><path d="M24 46l12 12h26V42L40 31z" fill="#222" opacity=".5"/><path d="M24 17l15 14-15 15" fill="none" stroke="#ddd" stroke-width="3"/><path d="M0 62.500h62" stroke="#1c1d1e"/></svg></button></div>
    <span class="gap gap-b"></span>
    <button aria-label="Web browser"><svg width="48" height="48" viewBox="0 0 48 48"><ellipse cx="24" cy="24" rx="23" ry="22.500" fill="#8560a2" stroke="#9d7db0" stroke-width="2"/><path d="M11 8q12-9 26 0l-3 5q-9 4-20 0zM3 17l9-2 4 3 1 6-5 6-5-3-4-2zM31 15l8-3 5 4 2 10-9 3-4-3-5 2-1-7zM14 20l12 2-1 5-11-1zM16 35l15-2 2 4 8-4-3 6-10 6-10 0-9-6-3-5 6-1z" fill="#5cfa5e"/><ellipse cx="24" cy="7" rx="7" ry="2.500" fill="#8560a2"/><path d="M11 11q13 6 27 0M8 20q15 7 33 0M5 29q18 7 38 0M10 38q14 5 28 0" fill="none" stroke="#453456"/><ellipse cx="24" cy="7" rx="3" ry="1.200" fill="#5cfa5e"/></svg></button>
    <button aria-label="Firefox"><svg width="45" height="48" viewBox="0 0 45 48"><ellipse cx="22.500" cy="24" rx="22" ry="22" fill="#eda02c"/><ellipse cx="23" cy="21" rx="16" ry="18.500" fill="#3d88bd"/><path d="M10 6Q20-1 32 4q-2 10-14 8z" fill="#65bfe5"/><path d="M34 4q13 9 10 23-2 13-15 18-16 3-24-8L0 25l4-18 5 6q5-2 9 1l-3 4 4 4-7 3q2 5 9 4-3 6-9 4 7 6 16 3 11-5 12-16 0-8-3-11z" fill="url(#fox)"/><path d="M34 4q15 13 7 28-5 7-12 8 11-7 10-20-1-9-5-16z" fill="#ffe27a"/></svg></button>
    <button aria-label="Terminal window"><svg width="44" height="48" viewBox="0 0 44 48"><path d="M3 4h40v40H3z" fill="url(#dark)"/><path d="M18 14l9 10-9 10" fill="none" stroke="#ddd" stroke-width="2"/></svg></button>
    <button aria-label="Mail"><svg width="48" height="48" viewBox="0 0 48 48"><path d="M1 4h25l7 6h15v10H1z" fill="#6787a8"/><path d="M1 14h47v30H1z" fill="url(#mail)"/><path d="M12 13h36L26 27z" fill="#fff"/></svg></button>
    <button aria-label="Writer"><svg width="48" height="48" viewBox="0 0 48 48"><rect x=".5" y=".5" width="47" height="47" rx="5" fill="#fff" stroke="#555"/><path d="M8 4h24l8 9v31H8z" fill="#1fa8f3"/><path d="M32 4h8v10z" fill="#137bb5"/><path d="M31 4l9 11" stroke="#fff"/><path d="M15 17h13M15 19.500h16M15 25h8M15 28.500h16M15 31h13" stroke="#b6e2fb"/></svg></button>
    <span class="gap gap-c"></span>
    <button aria-label="Files"><svg width="44" height="48" viewBox="0 0 44 48"><path d="M0 4h17l3 3h23v12H0z" fill="#147eb9"/><path d="M0 12h15l4-1 24 1v32H0z" fill="url(#blue)"/><path d="M15 21h13v9l-5 5h-8zM28 30h-5v5" fill="none" stroke="#247cae" stroke-width="1.500"/></svg></button>
    <button aria-label="Trash"><svg width="45" height="48" viewBox="0 0 45 48"><path d="M3 18l23 5-1 23-18-6z" fill="#2e72b6"/><path d="M26 23l17-5-4 22-14 6z" fill="#22609f"/><path d="M1 13l25 6 18-6v5l-18 6L1 18z" fill="#4a93d3"/><path d="M1 13l19-5 24 5-18 6z" fill="#5aa0da"/><path d="M5 13l15-3 19 3-13 4z" fill="#123a68"/><path d="M5 28l3-4 3 3M12 30l-2 5H7M5 34l-1-3" fill="none" stroke="#fff" stroke-width="2"/><path d="M14 29l5 1M14 34l8 2" stroke="#dce9f5" stroke-width="1.500"/></svg></button>
  </div>
</div>
</body>
</html>
```
FILE: styles.css
```css
* { box-sizing: border-box; }
body {
  margin: 0;
  min-height: 100vh;
  display: flex;
  flex-direction: column;
  position: relative;
  background: #ececec;
  color: #333;
  font: 14px "Noto Sans", sans-serif;
}
button {
  border: 0;
  padding: 0;
  background: none;
  color: inherit;
  font: inherit;
}
svg { display: block; overflow: visible; }

/* Desktop panel */
.topbar {
  height: 26px;
  display: grid;
  grid-template-columns: 1fr auto 1fr;
  align-items: center;
  padding: 0 9px 1px 7px;
  background: linear-gradient(90deg, #000 0, #020608 45%, #06201f 48%, #051a1b 54%, #010507 58%, #000407 100%);
  color: #eee;
  font: 14px "Liberation Sans", sans-serif;
}
.topbar-side { display: flex; align-items: center; }
.topbar-right { justify-content: flex-end; }
.activities {
  display: flex;
  align-items: center;
  justify-content: space-between;
  width: 34px;
  height: 20px;
  margin-right: 17px;
  padding-right: 5px;
  border: 1px solid #444;
  border-radius: 10px;
}
.knob { width: 19px; height: 18px; border-radius: 50%; background: #fff; }
.ring { width: 6px; height: 7px; border: 1px solid #999; border-radius: 50%; }
.top-item { display: flex; align-items: center; gap: 6px; margin-right: 23px; }
.top-app { gap: 4px; font-size: 15px; font-weight: bold; }
.tri { border: 5px solid transparent; border-top-color: #eee; border-bottom-width: 0; }
.lang { gap: 8px; margin-right: 20px; }
.tray { gap: 10px; margin-right: 0; }

/* Window frame */
.titlebar {
  height: 38px;
  display: grid;
  grid-template-columns: 1fr auto 1fr;
  align-items: center;
  padding: 0 13px;
  border-bottom: 2px solid #1c2020;
  border-top: 1px solid #2c3333;
  background: linear-gradient(#434a49, #3b4241);
}
.title { grid-column: 2; margin: 0; color: #eee; font: 600 14px "Noto Sans", sans-serif; }
.win-buttons { display: flex; justify-content: flex-end; gap: 24px; }

.menubar { height: 32px; display: flex; align-items: center; gap: 21px; padding: 0 7px 2px 10px; }
.doc-close { margin-left: auto; }

/* Toolbars */
.toolbar { height: 38px; display: flex; align-items: center; padding-left: 4px; }
.toolbar + .toolbar { height: 40px; padding-bottom: 1px; }
.grip { width: 9px; height: 24px; background: radial-gradient(circle, #bbb 1px, transparent 1px) 0 0 / 3px 6px repeat-y; }
.tb { width: 33px; height: 34px; display: flex; align-items: center; justify-content: center; flex: none; }
.tb svg { width: 24px; height: 24px; }
.tb-on { border: 1px solid #b0b0b0; border-radius: 4px; background: linear-gradient(#dedede, #f6f6f6); }
.dd { width: 17px; height: 34px; display: flex; align-items: center; justify-content: center; flex: none; }
.dd::before { content: ""; border: 3px solid transparent; border-top-color: #000; border-bottom-width: 0; }
.dd-off::before { border-top-color: #aaa; }
.sep { width: 8px; height: 22px; background: linear-gradient(#b5b5b5, #b5b5b5) center / 1px 100% no-repeat; flex: none; }
.combo { display: flex; gap: 2px; margin-left: 2px; flex: none; }
.combo input, .combo button {
  height: 31px;
  border: 1px solid #b2b2b2;
  border-radius: 4px;
}
.combo input {
  width: 140px;
  padding: 0 3px;
  background: linear-gradient(#eee, #fff 20%);
  color: #333;
  font: 14px "Noto Sans", sans-serif;
}
.combo button {
  width: 21px;
  display: flex;
  align-items: center;
  justify-content: center;
  background: linear-gradient(#fafafa, #dcdcdc);
}
.combo-size { margin-left: 10px; }
.combo-size input { width: 40px; }
.ico-abc { font: bold 11px "Noto Sans", sans-serif; fill: #444; text-anchor: middle; }
.ico-t { font: bold 20px "Liberation Serif", serif; fill: #444; text-anchor: middle; }
.ico-omega { font: bold 28px "Liberation Serif", serif; fill: #222; text-anchor: middle; }
.ico-a { font: 24px "DejaVu Serif", serif; fill: #777; stroke: #444; text-anchor: middle; }
.ico-bold { font-weight: bold; fill: #555; stroke-width: 2px; }
.ico-italic { font-style: italic; }
.ico-blue { fill: #9dbce4; stroke: #2f5f9f; }
.ico-b { font: bold 15px "Noto Sans", sans-serif; fill: #9dbce4; stroke: #2f5f9f; text-anchor: middle; }
.ico-n { font: bold 10px "Liberation Sans", sans-serif; fill: #26508f; text-anchor: middle; }

/* Document area */
.workspace { flex: 1; display: flex; background: #fff; }
.editor { flex: 1; display: flex; flex-direction: column; }
.ruler { width: 100%; background: #ececec; overflow: hidden; }
.ruler-num { font: 11px "Noto Sans", sans-serif; fill: #888; text-anchor: middle; }
.page { flex: 1; position: relative; padding: 12px 137px 0 8px; }
.crop { position: absolute; width: 9px; height: 13px; border: 0 solid #bbb; }
.crop-tl { top: 0; left: 0; border-width: 0 1px 1px 0; }
.crop-tr { top: 0; right: 0; border-width: 0 0 1px 1px; }
.crop-bl { bottom: 0; left: 0; border-width: 1px 1px 0 0; }
.crop-br { bottom: 0; right: 0; border-width: 1px 0 0 1px; }
.subnets {
  position: relative;
  width: 100%;
  table-layout: fixed;
  border-collapse: collapse;
  color: #000;
  font: 36px/46px "Liberation Serif", serif;
}
.c-name { width: 131px; }
.c-ip { width: 218px; }
.c-mask { width: 254px; }
.c-first { width: 219px; }
.c-prefix { width: 113px; }
.subnets th, .subnets td {
  height: 98px;
  padding: 4px 0 0 8px;
  border: 1px solid #000;
  font-weight: normal;
  text-align: center;
  vertical-align: top;
}
.subnets th { height: 144px; }
.subnets th:last-child { border-right-color: #bbb; }
.subnets .pad { padding-right: 8px; }
.subnets u {
  text-decoration: none;
  background: url("data:image/svg+xml,%3Csvg xmlns='http://www.w3.org/2000/svg' width='6' height='3'%3E%3Cpath d='M0 2.500L3 .5l3 2' fill='none' stroke='%23e00000'/%3E%3C/svg%3E") 0 33px repeat-x;
}

.splitter {
  width: 7px;
  display: flex;
  align-items: center;
  border: 1px solid #aaa;
  margin-bottom: 2px;
  background: #ececec;
}
.splitter button { width: 5px; height: 73px; display: flex; align-items: center; background: #888; }
.sidebar {
  width: 40px;
  display: flex;
  flex-direction: column;
  align-items: center;
  margin-bottom: 2px;
  padding-top: 3px;
  border-top: 1px solid #aaa;
  border-bottom: 1px solid #aaa;
  background: #ececec;
}
.sidebar hr { width: 24px; margin: 0 0 2px; border: 0; border-top: 1px solid #ccc; }
.side { width: 32px; height: 32px; display: flex; align-items: center; justify-content: center; margin-bottom: 3px; }
.side svg { width: 24px; height: 24px; }
.side-on { border: 1px solid #b5b5b5; border-radius: 4px; }
.statusbar { height: 24px; border-top: 1px solid #a5a5a5; }

/* Dock */
.dock { position: absolute; bottom: 0; left: 50%; width: 606px; margin-left: -303px; }
.dock-plate { position: absolute; bottom: 0; left: 0; width: 606px; height: 38px; }
.dock-items { position: relative; display: flex; align-items: flex-end; gap: 5px; padding: 0 0 26px 30px; }
.gap-a { width: 18px; }
.gap-b { width: 15px; }
.gap-c { width: 6px; }
.dock-hover { display: flex; flex-direction: column; align-items: center; gap: 7px; }
.dock-hover button { width: 62px; }
.tip {
  padding: 3px 3px;
  border-radius: 5px;
  background: #c3c3c3;
  color: #fff;
  font-size: 13px;
  line-height: 20px;
}
.ctf {
  font: italic bold 21px "Liberation Sans", sans-serif;
  fill: #fcb814;
  stroke: #111;
  stroke-width: 3px;
  paint-order: stroke;
  text-anchor: middle;
}
```
